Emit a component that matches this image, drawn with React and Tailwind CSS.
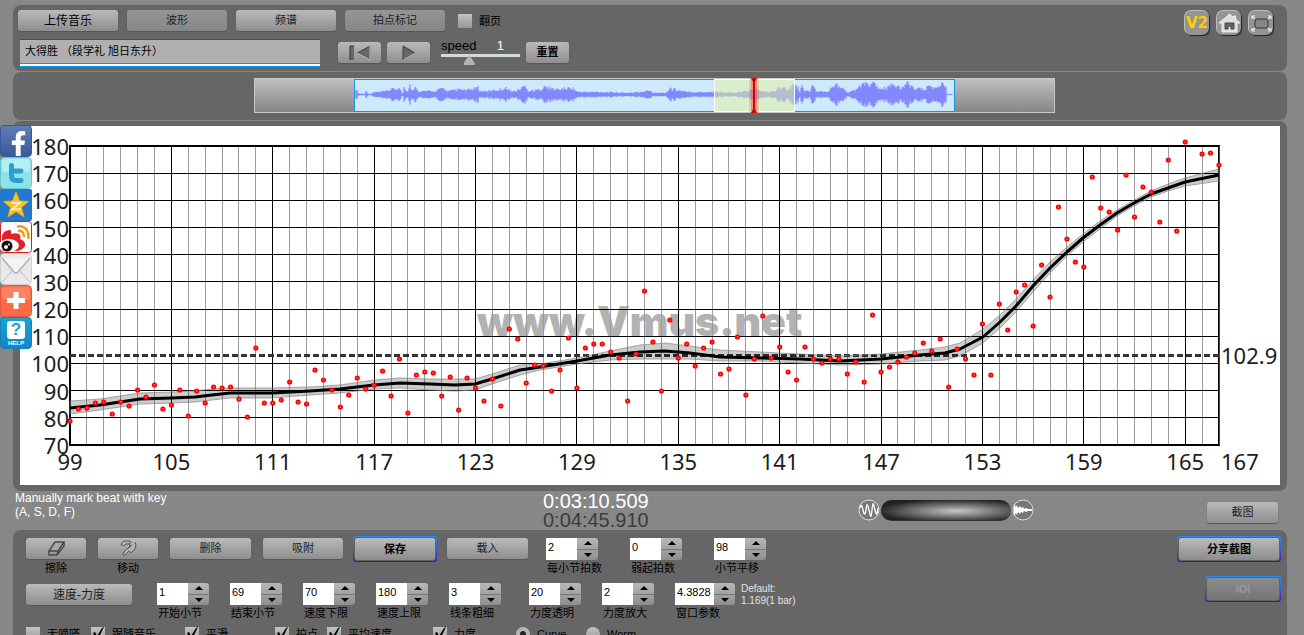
import React, { useState } from 'react';
import { FaFacebookF } from 'react-icons/fa';

const X0 = 70;
const X1 = 1219;
const BAR = (X1 - X0) / 68;

const barX = (bar) => X0 + (bar - 99) * BAR;
const tempoY = (bpm) => 445 - ((bpm - 70) * 299) / 110;

// one entry per half bar, null where no beat was marked
const beats = [
  421, 409, 408, 403, 402, 414, 402, 406, 390, 397, 385, 409, 405, 390, 416, 391, 403, 387, 388, 387,
  399, 417, 348, 403, 403, 400, 382, 402, 404, 370, 380, 390, 407, 395, 378, 389, 385, 371, 396, 359,
  413, 375, 372, 373, 396, 377, 410, 378, 388, 401, 379, 406, 329, 339, 383, 365, 366, 391, 370, 338,
  388, 348, 344, 344, 352, 358, 401, 354, 291, 342, 391, 320, 358, 344, 366, 348, 342, 374, 369, 337,
  395, 359, 316, 358, 347, 372, 380, 347, 359, 363, 359, 359, 374, 362, 382, 315, 372, 367, 362, 357,
  353, 343, 351, 339, 387, 349, 359, 375, 324, 375, 304, 330, 292, 285, 326, 265, 297, 207, 239, 262,
  267, 177, 208, 212, 230, 175, 217, 187, 192, 222, 160, 231, 142, null, 154, 153, 165,
];

// x, y, distance to the upper edge, distance to the lower edge
const curve = [
  [70, 408, 7, 6], [100, 405, 6, 5], [120, 402, 6, 5], [140, 399, 6, 5], [172, 398, 6, 5], [195, 397, 6, 5],
  [212, 395, 6, 5], [230, 393, 5, 5], [272, 393, 5, 5], [310, 391, 4, 4], [340, 389, 4, 4], [374, 385, 5, 4],
  [400, 383, 5, 5], [430, 384, 5, 6], [455, 385, 6, 6], [475, 384, 5, 6], [492, 379, 5, 5],
  [520, 370, 5, 5], [540, 367, 3, 3], [577, 361, 3, 3], [610, 355, 4, 5], [640, 352, 7, 7],
  [665, 351, 8, 8], [690, 353, 7, 6], [720, 357, 7, 4], [760, 358, 6, 3], [800, 359, 5, 4],
  [840, 361, 5, 4], [881, 359, 5, 5], [920, 355, 5, 6], [945, 353, 6, 7], [960, 349, 6, 7],
  [983, 337, 8, 6], [1000, 322, 7, 6], [1016, 306, 7, 6], [1033, 286, 6, 6], [1050, 268, 6, 5],
  [1067, 252, 5, 4], [1083, 238, 4, 4], [1100, 225, 4, 4], [1117, 213, 3, 3], [1134, 203, 3, 3],
  [1151, 194, 3, 3], [1168, 188, 4, 3], [1185, 182, 4, 4], [1219, 175, 6, 6],
];

const toPoints = (points) => points.map(([x, y]) => `${x},${y}`).join(' ');
const center = toPoints(curve);
const band = toPoints([
  ...curve.map(([x, y, u]) => [x, y - u]),
  ...curve.map(([x, y, , l]) => [x, y + l]).reverse(),
]);

// loudness envelope of the recording
const envelope = [
  [0, 7], [2, 2], [4, 1], [9, 1], [10, 6], [12, 1], [16, 1], [18, 3], [24, 3], [30, 4], [38, 7], [44, 7], [46, 2],
  [47, 2], [48, 12], [50, 5], [52, 5], [54, 12], [56, 5], [58, 5], [60, 11], [62, 4], [80, 4], [86, 8], [92, 4],
  [104, 6], [110, 5], [122, 8], [124, 4], [134, 4], [152, 8], [154, 4], [160, 4], [170, 11], [172, 4], [184, 6],
  [188, 9], [200, 6], [216, 8], [222, 3], [240, 3], [250, 3], [270, 2], [286, 3], [292, 6], [298, 2], [310, 2],
  [314, 7], [320, 6], [330, 3], [360, 3], [380, 2], [390, 4], [400, 6], [410, 3], [420, 4], [422, 10], [425, 5],
  [428, 14], [431, 6], [434, 9], [438, 13], [442, 8], [444, 3], [445, 12], [448, 5], [454, 4], [457, 12], [460, 3],
  [472, 4], [480, 12], [486, 9], [492, 2], [498, 5], [506, 11], [512, 13], [518, 13], [522, 7], [532, 8], [538, 13],
  [544, 7], [552, 13], [558, 8], [568, 6], [574, 11], [578, 7], [584, 12], [590, 13], [591, 0], [598, 0],
];

const amplitude = (x) => {
  const i = Math.max(1, envelope.findIndex((p) => p[0] >= x));
  const [ax, ay] = envelope[i - 1];
  const [bx, by] = envelope[i];
  const base = ay + ((by - ay) * (x - ax)) / (bx - ax);
  const noise = Math.abs(Math.sin(x * 12.9898) * 43758.5453) % 1;
  return base < 0.5 ? 0.5 : base * (0.55 + noise * 0.5);
};

const wave = Array.from({ length: 597 }, (_, x) => {
  const a = amplitude(x);
  return `M${x + 1} ${(14.5 - a).toFixed(1)}V${(14.5 + a).toFixed(1)}`;
}).join('');

const TempoChart = () => (
  <svg viewBox="20 126 1260 359" className="block w-full bg-white" fontFamily="'Noto Sans', sans-serif" fontSize="22">
    <text x="477" y="336" fontFamily="Inter, 'Liberation Sans', sans-serif" fontSize="41" fontWeight="900" fill="#b2b2b2">
      www.Vmus.net
    </text>
    <g shapeRendering="crispEdges">
      {Array.from({ length: 69 }, (_, i) => (
        <line key={i} x1={barX(99 + i)} x2={barX(99 + i)} y1="146" y2="445" stroke={i % 6 ? '#9b9b9b' : '#000'} />
      ))}
      {Array.from({ length: 12 }, (_, i) => (
        <line key={i} x1={X0} x2={X1} y1={tempoY(70 + i * 10)} y2={tempoY(70 + i * 10)} stroke="#000" />
      ))}
      <rect x={X0} y="146" width={X1 - X0} height="299" fill="none" stroke="#000" strokeWidth="2" />
    </g>
    <line x1={X0} x2={X1} y1="355.500" y2="355.500" stroke="#333" strokeWidth="3" strokeDasharray="6 3" />
    <polygon points={band} fill="#000" fillOpacity="0.2" stroke="#888" strokeOpacity="0.7" />
    <polyline points={center} fill="none" stroke="#000" strokeWidth="3" strokeLinejoin="round" />
    <line x1="1219" x2="1219" y1="146" y2="445" stroke="#e00" shapeRendering="crispEdges" />
    {beats.map((y, i) => y && (
      <circle key={i} cx={X0 + (i * BAR) / 2} cy={y} r="1.700" fill="#f88" stroke="#f00" strokeWidth="1.800" />
    ))}
    <g fill="#1c1c1c">
      {Array.from({ length: 12 }, (_, i) => (
        <text key={i} x="69" y={tempoY(70 + i * 10) + 9} textAnchor="end">{70 + i * 10}</text>
      ))}
      {[99, 105, 111, 117, 123, 129, 135, 141, 147, 153, 159, 165].map((bar) => (
        <text key={bar} x={barX(bar)} y="470" textAnchor="middle">{bar}</text>
      ))}
      <text x="1221" y="470">167</text>
      <text x="1221" y="364">102.9</text>
    </g>
  </svg>
);

const Button = ({ className = '', dim = false, children, ...props }) => (
  <button
    className={`flex h-[21px] items-center justify-center rounded-[3px] bg-linear-to-b text-[#222] shadow-[0_1px_1px_#555] ${dim ? 'from-[#969696] to-[#868686]' : 'from-[#bababa] to-[#8e8e8e]'} ${className}`}
    {...props}
  >
    {children}
  </button>
);

const RingButton = ({ className = '', children, ...props }) => (
  <div className="rounded-[3px] bg-linear-to-b from-[#1e90ff] to-[#3b0fb5] p-px">
    <button
      className={`flex h-[24px] items-center justify-center rounded-[3px] border border-[#626262] bg-linear-to-b text-[11px] font-bold ${className}`}
      {...props}
    >
      {children}
    </button>
  </div>
);

const Stepper = ({ label, value, wide = false }) => {
  const [number, setNumber] = useState(value);
  const step = (by) => setNumber(String(Number(number) + by));

  return (
    <div className={wide ? 'w-[60px]' : 'w-[52px]'}>
      <div className="flex h-[22px]">
        <input
          id={label}
          value={number}
          onChange={(e) => setNumber(e.target.value)}
          className="w-0 grow bg-white pb-1 pl-[2px] text-[11px] text-black outline-none"
        />
        <div className="flex w-[21px] flex-col divide-y divide-[#777] overflow-hidden rounded-r-[3px] bg-linear-to-b from-[#b8b8b8] to-[#8e8e8e]">
          <button aria-label={`${label} +`} onClick={() => step(1)} className="flex flex-1 items-center justify-center">
            <svg width="8" height="4" viewBox="0 0 8 4"><path d="M0 4L4 0L8 4Z" /></svg>
          </button>
          <button aria-label={`${label} -`} onClick={() => step(-1)} className="flex flex-1 items-center justify-center">
            <svg width="8" height="4" viewBox="0 0 8 4"><path d="M0 0L4 4L8 0Z" /></svg>
          </button>
        </div>
      </div>
      <label htmlFor={label} className="block pl-px text-[11px] leading-[17px] whitespace-nowrap">{label}</label>
    </div>
  );
};

const Check = ({ label, checked = false, className = '' }) => (
  <label className={`flex items-center gap-[7px] text-[11px] leading-[14px] whitespace-nowrap ${className}`}>
    <span className="relative size-[14px]">
      <input
        type="checkbox"
        defaultChecked={checked}
        className="peer block size-[14px] appearance-none bg-linear-to-b from-[#c4c4c4] to-[#969696]"
      />
      <svg viewBox="0 0 14 14" className="pointer-events-none absolute inset-0 hidden peer-checked:block">
        <path d="M2 6L4 5L6 9L11 1L13 0L7 12H5Z" fill="#000" />
      </svg>
    </span>
    {label}
  </label>
);

const Radio = ({ label, checked = false, className = '' }) => (
  <label className={`flex items-center gap-[7px] text-[11px] leading-[14px] ${className}`}>
    <input
      type="radio"
      name="view"
      defaultChecked={checked}
      className="size-[14px] appearance-none rounded-full bg-linear-to-b from-[#c4c4c4] to-[#969696] checked:bg-radial checked:from-[#222] checked:from-25% checked:to-[#b4b4b4] checked:to-35%"
    />
    {label}
  </label>
);

const RoundIcon = ({ label, children }) => (
  <a
    href="#"
    aria-label={label}
    className="flex size-[25px] items-center justify-center rounded-[7px] border-t border-l border-[#bbb] bg-[#949494] shadow-[1px_1px_1px_#222]"
  >
    {children}
  </a>
);

const ShareBar = () => (
  <nav className="absolute top-[125px] left-0 flex flex-col">
    <a href="#" aria-label="Facebook" className="flex size-8 items-end justify-end overflow-hidden rounded-[4px] border border-[#39589b] bg-linear-to-b from-[#5f7db8] to-[#3b5998] text-white">
      <FaFacebookF size={25} />
    </a>
    <a href="#" aria-label="Twitter" className="size-8">
      <svg viewBox="0 0 32 32">
        <rect x="0.5" y="0.5" width="31" height="31" rx="4" fill="#8fe3e6" stroke="#66c7cf" />
        <rect x="2" y="2" width="28" height="13" rx="3" fill="#b4f0f0" />
        <path d="M11.500 8.500V19Q11.500 23.500 16 23.500H21M11.500 14H21" fill="none" stroke="#2b9fd0" strokeWidth="5" strokeLinecap="round" strokeLinejoin="round" />
      </svg>
    </a>
    <a href="#" aria-label="Qzone" className="size-8">
      <svg viewBox="0 0 32 32">
        <rect width="32" height="32" rx="2" fill="#2478d0" />
        <path d="M16 3L19.500 12L28.500 12.500L21.500 18.500L24 28L16 22.500L8 28L10.500 18.500L3.500 12.500L12.500 12Z" fill="#ffc421" stroke="#f2a51a" />
        <path d="M11 14L20 13.500L12 20.500L21 20" fill="none" stroke="#fff8dc" strokeWidth="1.500" />
      </svg>
    </a>
    <a href="#" aria-label="Weibo" className="size-8">
      <svg viewBox="0 0 32 32">
        <rect x="0.5" y="0.5" width="31" height="31" rx="3" fill="#fff" stroke="#c22" />
        <path d="M2 15Q3 10 9 9Q12 9 11 13Q18 11 20 14Q21 17 20 18Q26 20 25 25Q22 30 16 30H2Z" fill="#e0222c" />
        <ellipse cx="9" cy="24.500" rx="10" ry="6.500" fill="#fff" />
        <circle cx="7" cy="25" r="5.500" fill="#111" />
        <circle cx="6" cy="26" r="2" fill="#fff" />
        <circle cx="9" cy="23.500" r="1" fill="#fff" />
        <path d="M18 10Q24 9 24 16M17 5.500Q29 4 28.500 18" fill="none" stroke="#f39a1b" strokeWidth="2.500" />
      </svg>
    </a>
    <a href="#" aria-label="Email" className="size-8">
      <svg viewBox="0 0 32 32">
        <rect x="0.5" y="0.5" width="31" height="31" rx="4" fill="#e9e9e9" stroke="#cfcfcf" />
        <path d="M2 29L12 18M30 29L20 18" fill="none" stroke="#bdbdbd" />
        <path d="M2 5L14 19Q16 21 18 19L30 5" fill="#f4f4f4" stroke="#b0b0b0" strokeWidth="1.500" />
      </svg>
    </a>
    <a href="#" aria-label="More" className="size-8">
      <svg viewBox="0 0 32 32">
        <rect x="0.5" y="0.5" width="31" height="31" rx="4" fill="#fb6a45" stroke="#e8593a" />
        <rect x="2" y="2" width="28" height="13" rx="3" fill="#fd8362" />
        <path d="M16 7V24M7 15.500H25" stroke="#fff" strokeWidth="5" />
      </svg>
    </a>
    <a href="#" aria-label="Help" className="flex size-8 flex-col items-center rounded-[4px] border border-[#1580b4] bg-linear-to-b from-[#1aa3d4] to-[#1187c5] pt-[3px] text-white">
      <span className="flex h-[18px] w-[18px] items-center justify-center rounded-[3px] bg-white text-[17px] font-bold text-[#1f9fd3]">?</span>
      <span className="text-[6px] leading-[8px] font-bold">HELP</span>
    </a>
  </nav>
);

const App = () => {
  const [speed, setSpeed] = useState(1);

  return (
    <div className="relative h-screen overflow-hidden bg-[#878787] pt-[5px] pr-[17px] pl-[13px] font-['Liberation_Sans','Noto_Sans_CJK_SC',sans-serif] text-[11px] text-black">
      <header className="flex justify-between rounded-[8px] bg-[#666] px-[5px] pt-[5px] pb-1">
        <div className="flex flex-col gap-2">
          <div className="flex items-center gap-[9px]">
            <Button className="w-[100px] text-[12px] text-black">上传音乐</Button>
            <Button dim className="w-[100px]">波形</Button>
            <Button className="w-[100px]">频谱</Button>
            <Button dim className="w-[100px]">拍点标记</Button>
            <Check label="翻页" className="ml-1" />
          </div>
          <div className="flex items-start pl-[2px]">
            <div className="w-[300px]">
              <input
                aria-label="音乐"
                defaultValue="大得胜 （段学礼 旭日东升）"
                className="block h-[24px] w-full border-t border-[#4c4c4c] bg-[#b0b0b0] px-[5px] pb-1 text-[11px] outline-none"
              />
              <div className="h-1 border-y border-[#0a95f5] bg-white" />
            </div>
            <div className="mt-[3px] ml-[18px] flex gap-[6px]">
              <Button aria-label="Back to start" className="w-[43px]">
                <svg width="22" height="16" viewBox="0 0 22 16">
                  <path d="M1 1H5V15H1Z" fill="#666" />
                  <path d="M1 15V1H5" fill="none" stroke="#333" />
                  <path d="M21 1V15L8 8Z" fill="#666" stroke="#444" />
                  <path d="M8 8L21 15V1" fill="none" stroke="#ccc" />
                </svg>
              </Button>
              <Button aria-label="Play" className="w-[43px]">
                <svg width="14" height="16" viewBox="0 0 14 16">
                  <path d="M1 1V15L13 8Z" fill="#666" stroke="#3c3c3c" />
                  <path d="M1 15L13 8" stroke="#bbb" />
                </svg>
              </Button>
            </div>
            <div className="ml-[11px] w-[79px]">
              <label htmlFor="speed" className="mb-[2px] flex justify-between pr-4 text-[13px] leading-[13px]">
                speed <span className="text-white">{speed}</span>
              </label>
              <input
                id="speed"
                type="range"
                min="0"
                max="3"
                value={speed}
                onChange={(e) => setSpeed(e.target.value)}
                className="block h-[12px] w-full appearance-none bg-transparent [&::-webkit-slider-runnable-track]:h-[12px] [&::-webkit-slider-runnable-track]:border-t-[3px] [&::-webkit-slider-runnable-track]:border-[#d4dada] [&::-webkit-slider-thumb]:mt-[-2px] [&::-webkit-slider-thumb]:h-[10px] [&::-webkit-slider-thumb]:w-[11px] [&::-webkit-slider-thumb]:appearance-none [&::-webkit-slider-thumb]:bg-[#b4b4b4] [&::-webkit-slider-thumb]:[clip-path:polygon(50%_0,100%_80%,100%_100%,0_100%,0_80%)]"
              />
            </div>
            <Button className="mt-[3px] ml-[6px] w-[43px] font-bold text-black">重置</Button>
          </div>
        </div>
        <div className="flex gap-[7px] pr-[9px]">
          <RoundIcon label="V2">
            <span className="font-['DejaVu_Sans',sans-serif] text-[15px] font-bold text-[#ffcc00]">V2</span>
          </RoundIcon>
          <RoundIcon label="Home">
            <svg width="23" height="21" viewBox="0 0 23 21" className="shrink-0">
              <path d="M11.500 1L1 10H4V19H19V10H22L17.500 6V3H15.500V4.500Z" fill="#dedede" stroke="#eee" />
              <path d="M7 16V10H16V16H13V13H10V16Z" fill="#666" stroke="#444" />
            </svg>
          </RoundIcon>
          <RoundIcon label="Full screen">
            <svg width="23" height="21" viewBox="0 0 23 21" fill="none" className="shrink-0">
              <rect x="5" y="6" width="13" height="9" rx="2" fill="#858585" stroke="#333" />
              <path d="M2 6V3H5M2 3L5 6M18 3H21V6M21 3L18 6M2 15V18H5M2 18L5 15M18 18H21V15M21 18L18 15" stroke="#e4e4e4" strokeWidth="1.200" />
            </svg>
          </RoundIcon>
        </div>
      </header>

      <section className="mt-px flex h-12 justify-center rounded-[8px] bg-[#666] pt-[6px] pl-2">
        <div className="h-[35px] w-[801px] border border-[#c8c8c8] bg-linear-to-b from-[#c0c0c0] to-[#868686] px-[99px]">
          <div className="relative h-[33px] border border-[#1793e6] bg-[#cdeafd]">
            <svg viewBox="0 0 599 31" className="block h-full w-full" preserveAspectRatio="none">
              <path d={wave} stroke="#8488ff" strokeWidth="1.200" />
            </svg>
            <div className="absolute inset-y-[-1px] left-[60%] w-[13.5%] border border-white bg-[#e8f29a]/50" />
            <svg viewBox="0 0 14 35" className="absolute top-[-2px] left-[392px] h-[35px] w-[14px]">
              <rect x="2" width="10" height="35" fill="#f00" fillOpacity="0.15" />
              <rect x="4" width="6" height="35" fill="#f00" fillOpacity="0.25" />
              <path d="M4 0H10L8 4V31L10 35H4L6 31V4Z" fill="#d80000" />
            </svg>
          </div>
        </div>
      </section>

      <main className="mt-px rounded-[8px] bg-[#666] px-[7px] pt-[5px] pb-[6px]">
        <TempoChart />
      </main>

      <section className="flex h-[39px] items-start pl-[2px] text-white">
        <p className="w-[528px] text-[12px] leading-[14px]">
          Manually mark beat with key
          <br />
          (A, S, D, F)
        </p>
        <div className="w-[315px] pt-px text-[20px] leading-[19px]">
          <p>0:03:10.509</p>
          <p className="text-[#3c3c3c]">0:04:45.910</p>
        </div>
        <div className="mt-2 flex items-center">
          <svg width="22" height="22" viewBox="0 0 22 22" fill="none" stroke="#fff">
            <circle cx="11" cy="11" r="10" fill="#777" stroke="#ddd" />
            <path d="M2 9C3 5 4 6 5 11S7 17 8 11S9 3 11 11S13 20 14 11S15 3 17 11S19 14 20 9" strokeWidth="1.300" />
          </svg>
          <input
            type="range"
            aria-label="Volume"
            className="mx-px h-[21px] w-[130px] appearance-none rounded-full border-b border-[#333] bg-radial-[at_58%_55%] from-[#c8c8c8] to-[#222] to-75% [&::-webkit-slider-thumb]:appearance-none"
          />
          <svg width="22" height="22" viewBox="0 0 22 22">
            <circle cx="11" cy="11" r="10" fill="#777" stroke="#ddd" />
            <path d="M2 5L4 8L5 6L6 9L8 7L9 9L11 8L12 10L14 9L16 10L20 10V12L16 12L14 13L12 12L11 14L9 13L8 15L6 13L5 16L4 14L2 17Z" fill="#fff" />
          </svg>
        </div>
        <Button className="mt-[11px] mr-[9px] ml-auto w-[71px]">截图</Button>
      </section>

      <footer className="rounded-t-[8px] bg-[#666] px-[6px] pt-[6px] pb-5 pl-[13px]">
        <div className="flex h-[46px] items-start">
          <div className="flex items-start gap-3 pt-[2px]">
            <div className="flex flex-col items-center leading-[18px]">
              <Button className="w-[60px]" aria-label="擦除">
                <svg width="17" height="15" viewBox="0 0 17 15" fill="#aaa" stroke="#4a4a4a" strokeWidth="1.500">
                  <path d="M7 1H16L10 10H1Z" />
                  <path d="M1 10V14H9L16 5V1M10 10L9 14" fill="none" />
                </svg>
              </Button>
              <span>擦除</span>
            </div>
            <div className="flex flex-col items-center leading-[18px]">
              <Button className="w-[60px]" aria-label="移动">
                <svg width="17" height="17" viewBox="0 0 17 17" fill="#b4b4b4" stroke="#555">
                  <path d="M2 6Q0 3 4 1H10Q12 3 9 4L10 5Q11 7 8 8L4 12Q2 16 5 15L9 11Q10 14 12 12L15 9Q17 5 15 2" />
                  <path d="M6 4L3 6M9 4H6M8 8L12 5" fill="none" />
                </svg>
              </Button>
              <span>移动</span>
            </div>
            <Button className="w-[81px]">删除</Button>
            <Button className="w-[80px]">吸附</Button>
          </div>
          <div className="mx-[10px]">
            <RingButton className="w-[82px] from-[#bcbcbc] to-[#8c8c8c]">保存</RingButton>
          </div>
          <Button className="mt-[2px] w-[81px]">载入</Button>
          <div className="mt-[2px] ml-[18px] flex gap-8">
            <Stepper label="每小节拍数" value="2" />
            <Stepper label="弱起拍数" value="0" />
            <Stepper label="小节平移" value="98" />
          </div>
          <div className="ml-auto">
            <RingButton className="w-[102px] from-[#bcbcbc] to-[#8c8c8c]">分享截图</RingButton>
          </div>
        </div>

        <div className="flex h-[45px] items-start">
          <Button className="mt-[2px] w-[106px] text-[12px]">速度-力度</Button>
          <div className="mt-px ml-[25px] flex gap-[21px]">
            <Stepper label="开始小节" value="1" />
            <Stepper label="结束小节" value="69" />
            <Stepper label="速度下限" value="70" />
            <Stepper label="速度上限" value="180" />
            <Stepper label="线条粗细" value="3" />
          </div>
          <div className="mt-px ml-[28px] flex gap-[21px]">
            <Stepper label="力度透明" value="20" />
            <Stepper label="力度放大" value="2" />
            <Stepper label="窗口参数" value="4.3828" wide />
          </div>
          <p className="ml-[6px] pt-px text-[10px] leading-[12px] text-[#e4e4e4]">
            Default:
            <br />
            1.169(1 bar)
          </p>
          <div className="-mt-[6px] ml-auto">
            <RingButton className="w-[74px] from-[#8c8c8c] to-[#757575] text-[#999]">IOI</RingButton>
          </div>
        </div>

        <div className="flex">
          <Check label="无嘀嗒" className="w-[65px]" />
          <Check label="跟随音乐" checked className="w-[94px]" />
          <Check label="平滑" checked className="w-[90px]" />
          <Check label="拍点" checked className="w-[52px]" />
          <Check label="平均速度" checked className="w-[106px]" />
          <Check label="力度" checked className="w-[83px]" />
          <Radio label="Curve" checked className="w-[70px]" />
          <Radio label="Worm" />
        </div>
      </footer>

      <ShareBar />
    </div>
  );
};

export default App;
